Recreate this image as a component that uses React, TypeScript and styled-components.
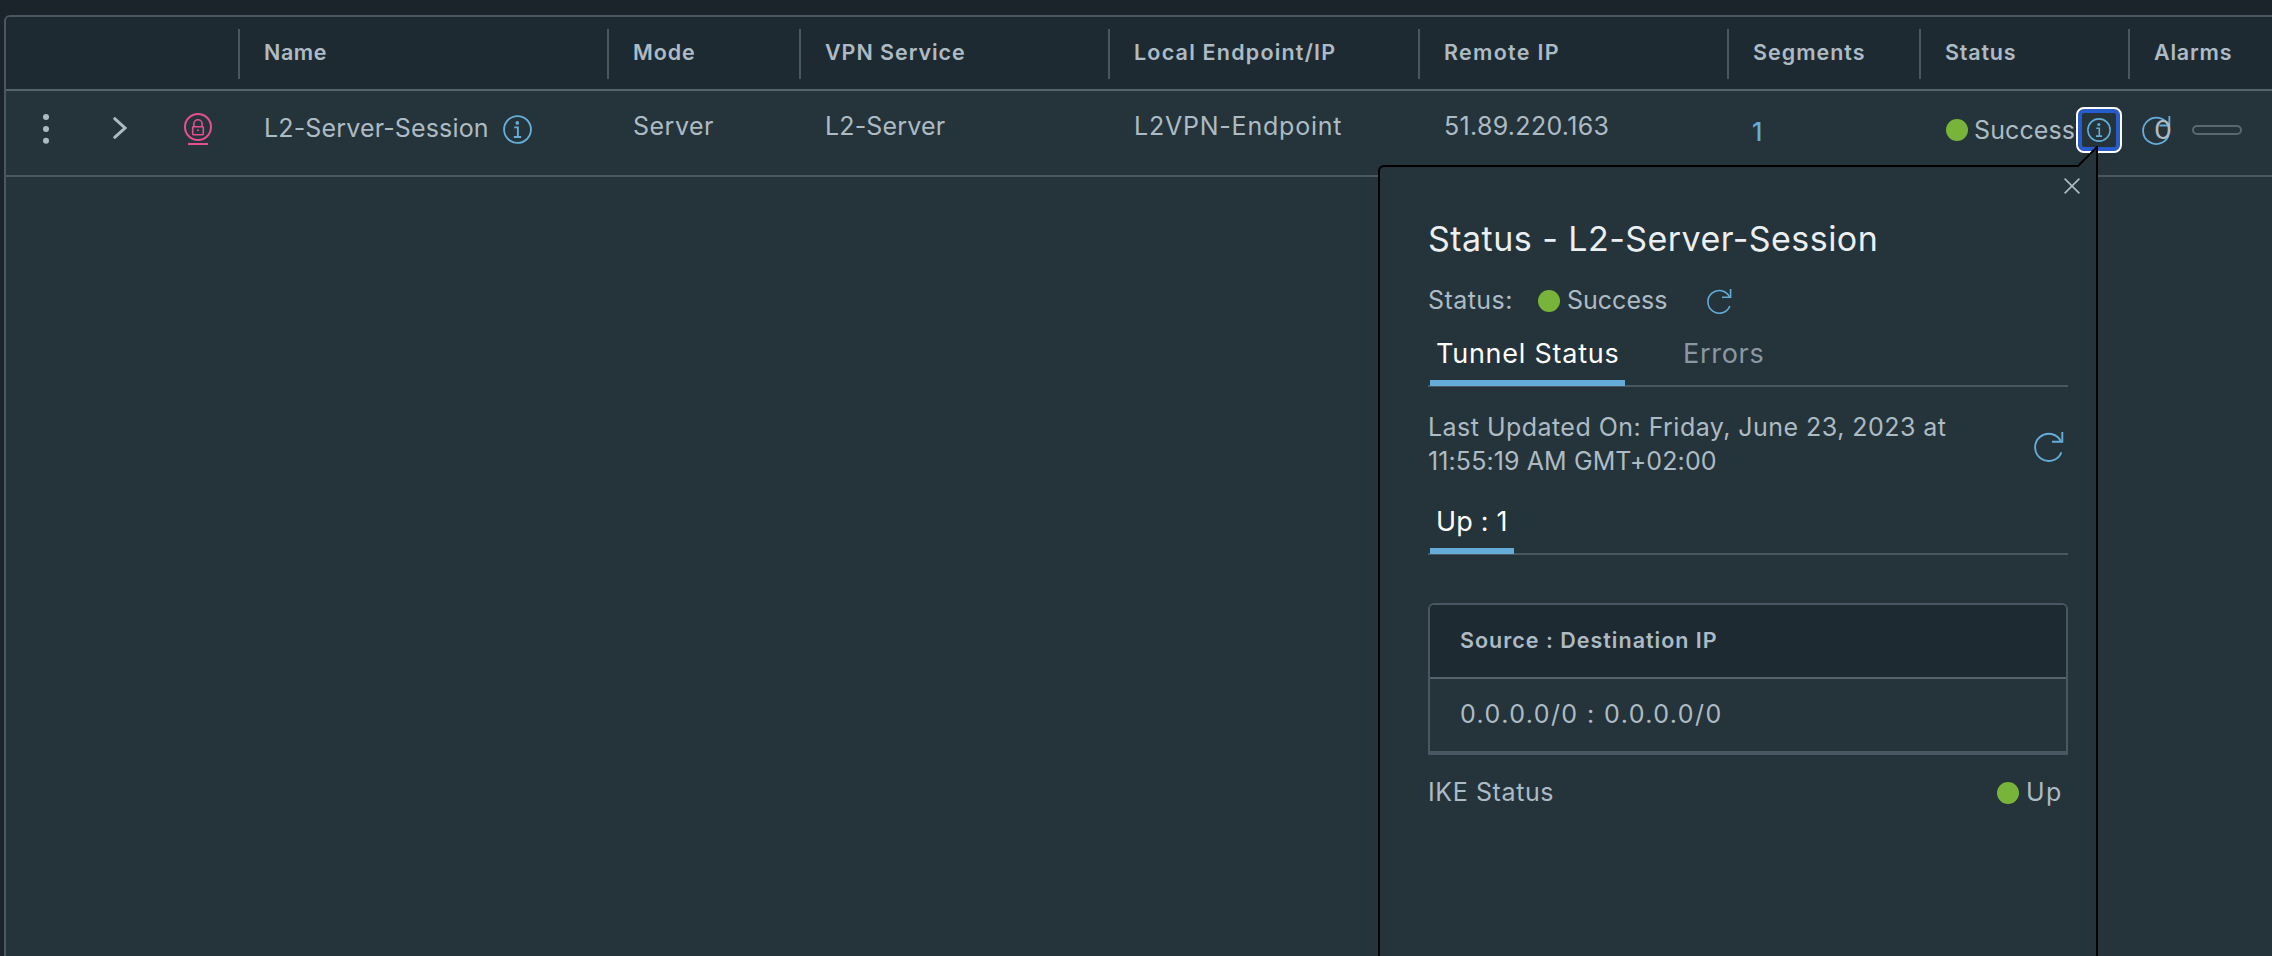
import React from 'react';
import styled, { createGlobalStyle } from 'styled-components';

const c = {
  page: '#1b242b',
  header: '#1e2a32',
  panel: '#25333a',
  line: '#4a5661',
  headLine: '#566470',
  text: '#adbbc4',
  blue: '#65add9',
  green: '#78b439',
  pink: '#e74f92',
};

const GlobalStyle = createGlobalStyle`
  * { box-sizing: border-box; }
  body {
    margin: 0;
    background: ${c.page};
    color: ${c.text};
    font-family: Inter, sans-serif;
    font-size: 25px;
    overflow: hidden;
  }
  svg { display: block; flex: none; }
`;

const Page = styled.main`
  position: relative;
  width: 2272px;
  height: 956px;
  padding: 15px 0 0 4px;
  overflow: hidden;
`;

const Grid = styled.section`
  width: 2290px;
  height: 960px;
  border: 2px solid ${c.line};
  border-radius: 6px;
  background: ${c.panel};
  overflow: hidden;
`;

const columns = '232px 369px 192px 309px 310px 309px 192px 209px 160px';

const HeaderRow = styled.div`
  display: grid;
  grid-template-columns: ${columns};
  height: 74px;
  padding-top: 12px;
  background: ${c.header};
  border-bottom: 2px solid ${c.headLine};
`;

const HeaderCell = styled.div<{ $divided?: boolean }>`
  height: 50px;
  padding-left: 24px;
  border-left: ${(p) => (p.$divided ? `2px solid ${c.line}` : '0')};
`;

const Label = styled.span<{
  $size?: number;
  $weight?: number;
  $line?: number;
  $track?: number;
  $color?: string;
}>`
  display: block;
  white-space: nowrap;
  font-size: ${(p) => p.$size ?? 25}px;
  font-weight: ${(p) => p.$weight ?? 400};
  line-height: ${(p) => p.$line ?? 34}px;
  letter-spacing: ${(p) => p.$track ?? 0}px;
  color: ${(p) => p.$color ?? c.text};
`;

const BodyRow = styled.div`
  display: grid;
  grid-template-columns: ${columns};
  height: 86px;
  border-bottom: 2px solid ${c.line};
`;

const Cell = styled.div<{ $top?: number; $left?: number }>`
  display: flex;
  align-items: flex-start;
  padding: ${(p) => p.$top ?? 18}px 0 0 ${(p) => p.$left ?? 26}px;
`;

const Tools = styled.div`
  display: flex;
  align-items: flex-start;
  padding: 20px 0 0 30px;
  gap: 44px;
`;

const Dot = styled.span<{ $drop?: number }>`
  flex: none;
  width: 22px;
  height: 22px;
  margin-top: ${(p) => p.$drop ?? 0}px;
  border-radius: 50%;
  background: ${c.green};
`;

const StatusLine = styled.div<{ $gap?: number }>`
  display: flex;
  align-items: center;
  gap: ${(p) => p.$gap ?? 7}px;
`;

const IconSlot = styled.div`
  padding-top: 2px;
`;

const StatusCell = styled.div`
  display: flex;
  align-items: center;
  height: 46px;
  margin-top: 16px;
  padding-left: 27px;
`;

const SuccessText = styled(StatusLine)`
  width: 130px;
  flex: none;
`;

const FocusButton = styled.button`
  display: flex;
  align-items: center;
  justify-content: center;
  flex: none;
  width: 46px;
  height: 46px;
  padding: 0;
  background: ${c.panel};
  border: 2px solid #fff;
  border-radius: 8px;
  box-shadow: inset 0 0 0 4px #265ccb;
`;

const RefreshSlot = styled.div`
  margin-left: 20px;
`;

const AlarmCell = styled.div`
  display: flex;
  align-items: center;
  height: 46px;
  margin-top: 16px;
  padding-left: 26px;
  gap: 21px;
`;

const AlarmCount = styled(Label)`
  margin-left: 1px;
  transform: scaleX(1.14);
`;

const AlarmBar = styled.span`
  width: 50px;
  height: 10px;
  border: 2px solid #5b6872;
  border-radius: 5px;
`;

const Signpost = styled.aside`
  position: absolute;
  left: 1378px;
  top: 165px;
  width: 720px;
  height: 800px;
  padding: 48px 28px 0 48px;
  background: ${c.panel};
  border: 2px solid #000;
  border-top-left-radius: 6px;
`;

const Pointer = styled.svg`
  position: absolute;
  right: -2px;
  top: -21px;
`;

const CloseButton = styled.button`
  position: absolute;
  right: 16px;
  top: 11px;
  padding: 0;
  border: 0;
  background: none;
`;

const SummaryRow = styled.div`
  display: flex;
  align-items: center;
  height: 34px;
  margin-top: 20px;
`;

const SummaryLabel = styled.div`
  width: 110px;
`;

const SummaryValue = styled.div`
  width: 169px;
`;

const Tabs = styled.div<{ $height: number }>`
  display: flex;
  height: ${(p) => p.$height}px;
  padding-left: 2px;
  border-bottom: 2px solid ${c.line};
`;

const Tab = styled.div<{ $width: number; $active?: boolean }>`
  display: flex;
  align-items: flex-end;
  width: ${(p) => p.$width}px;
  height: calc(100% + 1px);
  padding: 0 0 ${(p) => (p.$active ? 9 : 15)}px 6px;
  border-bottom: ${(p) => (p.$active ? `6px solid ${c.blue}` : '0')};
  margin-right: 52px;
  flex: none;
`;

const Updated = styled.div`
  display: flex;
  justify-content: space-between;
  height: 68px;
  margin-top: 23px;
`;

const UpdatedRefresh = styled.div`
  padding: 22px 4px 0 0;
`;

const TunnelTable = styled.div`
  margin-top: 48px;
  height: 152px;
  border: 2px solid ${c.line};
  border-bottom-width: 4px;
  border-radius: 6px 6px 0 0;
  overflow: hidden;
`;

const TunnelHead = styled.div`
  height: 74px;
  padding: 18px 0 0 30px;
  background: ${c.header};
  border-bottom: 2px solid ${c.headLine};
`;

const TunnelBody = styled.div`
  padding: 18px 0 0 30px;
`;

const IkeRow = styled.div`
  display: flex;
  align-items: center;
  justify-content: space-between;
  height: 34px;
  margin-top: 20px;
  padding-right: 5px;
`;

const InfoIcon = ({ size }: { size: number }) => (
  <svg width={size} height={size} viewBox="0 0 30 30" fill="none" stroke={c.blue} strokeWidth="1.9">
    <circle cx="15" cy="15" r="13.9" />
    <circle cx="14.8" cy="8.2" r="1.9" fill={c.blue} stroke="none" />
    <path d="M11.6 12.8h3.8v9.4M11.2 22.7h7.6" strokeWidth="2" />
  </svg>
);

const RefreshIcon = ({ size }: { size: number }) => (
  <svg width={size} height={size} viewBox="0 0 30 30" fill="none" stroke={c.blue} strokeWidth="1.9">
    <path d="M27.4 20.3A13.6 13.6 0 1 1 26.9 9.3" />
    <path d="M28.3 0v9.8H18" />
  </svg>
);

const DotsIcon = () => (
  <svg width="32" height="40" viewBox="0 0 32 40" fill={c.text}>
    <circle cx="10" cy="6" r="3" />
    <circle cx="10" cy="18" r="3" />
    <circle cx="10" cy="29.7" r="3" />
  </svg>
);

const ChevronIcon = () => (
  <svg width="27" height="40" viewBox="0 0 27 40" fill="none" stroke={c.text} strokeWidth="3">
    <path d="M2.7 7.7L13 17L2.7 26.3" strokeLinecap="round" />
  </svg>
);

const LockIcon = () => (
  <svg width="30" height="36" viewBox="0 0 30 36" fill="none" stroke={c.pink} strokeWidth="2">
    <circle cx="15" cy="16" r="13" />
    <path d="M10.9 15.7v-2.8a4.1 4.1 0 0 1 8.2 0v2.8" strokeWidth="1.6" />
    <rect x="9.7" y="15.7" width="10.6" height="8" rx=".6" strokeWidth="1.6" />
    <circle cx="15" cy="19.3" r="1" fill={c.pink} stroke="none" />
    <path d="M5 33h20" />
  </svg>
);

const CloseIcon = () => (
  <svg width="16" height="16" viewBox="0 0 16 16" stroke={c.text} strokeWidth="1.6">
    <path d="M.6.6l14.8 14.8M15.4.6L.6 15.4" />
  </svg>
);

const headings: [string, number][] = [
  ['Name', 0.6],
  ['Mode', 0.9],
  ['VPN Service', 0.95],
  ['Local Endpoint/IP', 1.2],
  ['Remote IP', 1.3],
  ['Segments', 1],
  ['Status', 0.8],
  ['Alarms', 0.8],
];

export default function App() {
  return (
    <Page>
      <GlobalStyle />
      <Grid>
        <HeaderRow>
          <HeaderCell />
          {headings.map(([name, track]) => (
            <HeaderCell key={name} $divided>
              <Label $size={21.5} $weight={600} $line={47} $track={track}>{name}</Label>
            </HeaderCell>
          ))}
        </HeaderRow>
        <BodyRow>
          <Tools>
            <DotsIcon />
            <ChevronIcon />
            <LockIcon />
          </Tools>
          <Cell $top={20}>
            <StatusLine $gap={14}>
              <Label $track={0.15}>L2-Server-Session</Label>
              <IconSlot><InfoIcon size={29} /></IconSlot>
            </StatusLine>
          </Cell>
          <Cell><Label $track={0.5}>Server</Label></Cell>
          <Cell><Label $track={0.15}>L2-Server</Label></Cell>
          <Cell><Label $track={0.78}>L2VPN-Endpoint</Label></Cell>
          <Cell><Label $track={0.3}>51.89.220.163</Label></Cell>
          <Cell $top={24} $left={25}><Label $weight={500} $color={c.blue}>1</Label></Cell>
          <StatusCell>
            <SuccessText $gap={6}>
              <Dot />
              <Label $track={0.1}>Success</Label>
            </SuccessText>
            <FocusButton aria-label="Status details"><InfoIcon size={24} /></FocusButton>
            <RefreshSlot><RefreshIcon size={29} /></RefreshSlot>
          </StatusCell>
          <AlarmCell>
            <AlarmCount>0</AlarmCount>
            <AlarmBar />
          </AlarmCell>
        </BodyRow>
      </Grid>

      <Signpost>
        <Pointer width="22" height="24" viewBox="0 0 22 24">
          <path d="M1.5 24V20.2L21 1V24z" fill={c.panel} />
          <path d="M0 20H2L21 1V24" fill="none" stroke="#000" strokeWidth="2" />
        </Pointer>
        <CloseButton aria-label="Close"><CloseIcon /></CloseButton>
        <Label $size={34} $line={48} $track={0.46} $color="#eceff1">Status - L2-Server-Session</Label>
        <SummaryRow>
          <SummaryLabel><Label $track={0.45}>Status:</Label></SummaryLabel>
          <SummaryValue>
            <StatusLine>
              <Dot $drop={2} />
              <Label>Success</Label>
            </StatusLine>
          </SummaryValue>
          <IconSlot><RefreshIcon size={25} /></IconSlot>
        </SummaryRow>
        <Tabs $height={70}>
          <Tab $width={195} $active>
            <Label $size={27} $track={0.75} $color="#fff">Tunnel Status</Label>
          </Tab>
          <Tab $width={90}>
            <Label $size={27} $track={0.7} $color="#8b98a3">Errors</Label>
          </Tab>
        </Tabs>
        <Updated>
          <div>
            <Label $track={0.46}>Last Updated On: Friday, June 23, 2023 at</Label>
            <Label $track={0.1}>11:55:19 AM GMT+02:00</Label>
          </div>
          <UpdatedRefresh><RefreshIcon size={30} /></UpdatedRefresh>
        </Updated>
        <Tabs $height={77}>
          <Tab $width={84} $active>
            <Label $size={27} $track={0.2} $color="#fff">Up : 1</Label>
          </Tab>
        </Tabs>
        <TunnelTable>
          <TunnelHead>
            <Label $size={21.5} $weight={600} $track={1}>Source : Destination IP</Label>
          </TunnelHead>
          <TunnelBody>
            <Label $track={1.43}>0.0.0.0/0 : 0.0.0.0/0</Label>
          </TunnelBody>
        </TunnelTable>
        <IkeRow>
          <Label $track={0.6}>IKE Status</Label>
          <StatusLine>
            <Dot $drop={2} />
            <Label $track={1.6}>Up</Label>
          </StatusLine>
        </IkeRow>
      </Signpost>
    </Page>
  );
}
